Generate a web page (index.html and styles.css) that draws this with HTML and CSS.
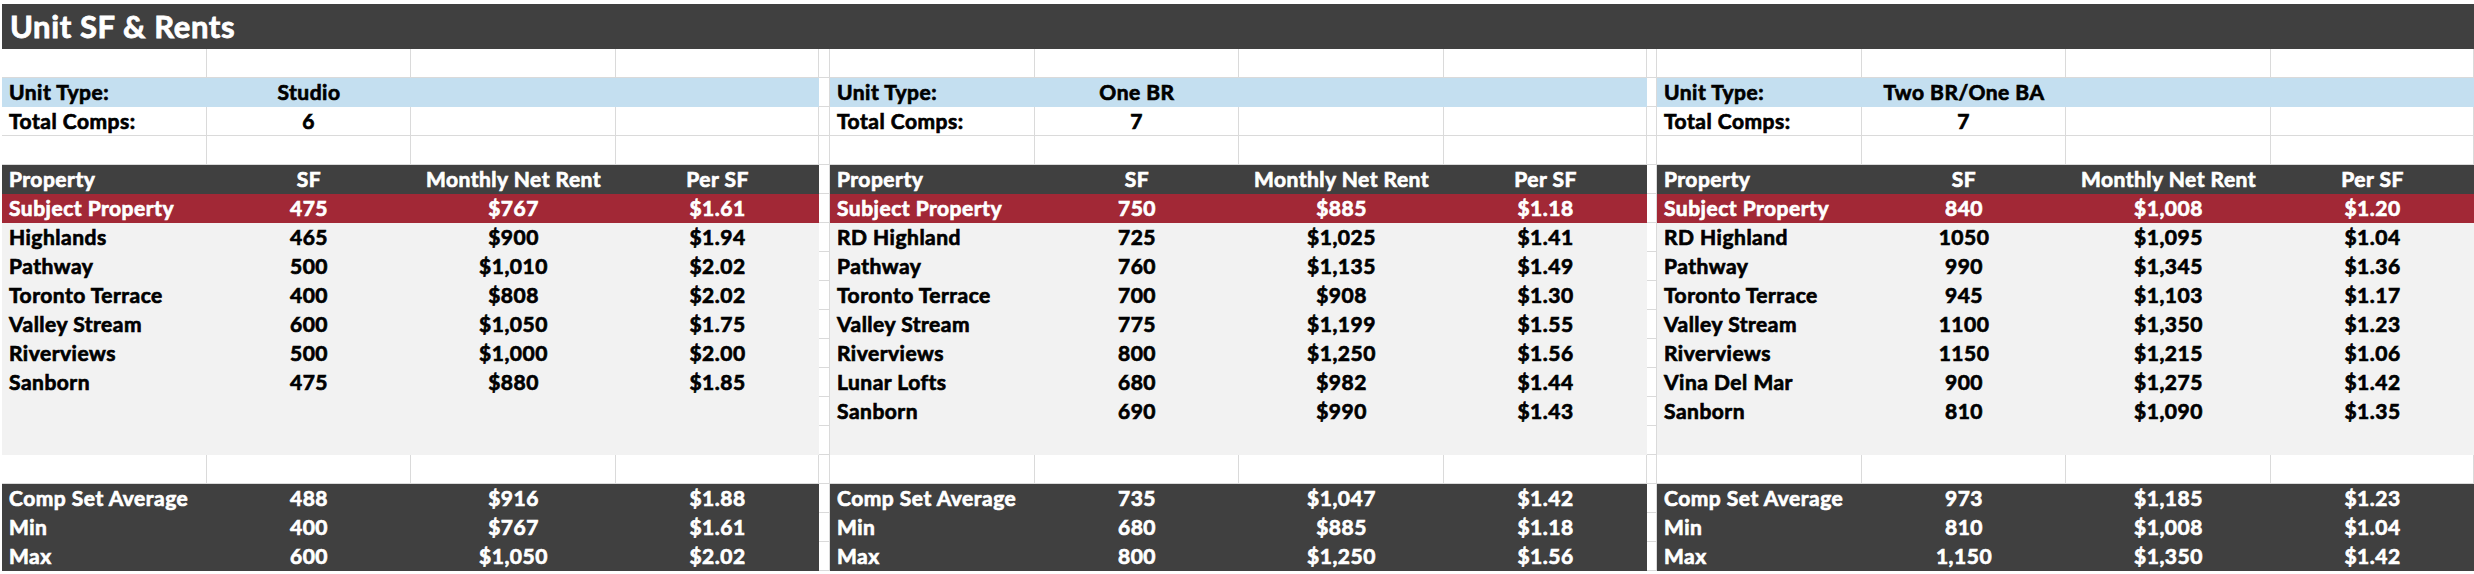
FILE: index.html
```html
<!DOCTYPE html>
<html lang="en">
<head>
<meta charset="utf-8">
<title>Unit SF &amp; Rents</title>
<link rel="stylesheet" href="styles.css">
</head>
<body>
<div class="sheet">
  <div class="title">Unit SF &amp; Rents</div>
  <div class="panels">

    <section class="panel">
      <div class="row blank"><div class="c"></div><div class="c"></div><div class="c"></div><div class="c"></div></div>
      <div class="row info"><div class="c l">Unit Type:</div><div class="c">Studio</div><div class="c"></div><div class="c"></div></div>
      <div class="row blank"><div class="c l">Total Comps:</div><div class="c">6</div><div class="c"></div><div class="c"></div></div>
      <div class="row blank"><div class="c"></div><div class="c"></div><div class="c"></div><div class="c"></div></div>
      <div class="row dark"><div class="c l">Property</div><div class="c">SF</div><div class="c">Monthly Net Rent</div><div class="c">Per SF</div></div>
      <div class="row subject"><div class="c l">Subject Property</div><div class="c">475</div><div class="c">$767</div><div class="c">$1.61</div></div>
      <div class="row comp"><div class="c l">Highlands</div><div class="c">465</div><div class="c">$900</div><div class="c">$1.94</div></div>
      <div class="row comp"><div class="c l">Pathway</div><div class="c">500</div><div class="c">$1,010</div><div class="c">$2.02</div></div>
      <div class="row comp"><div class="c l">Toronto Terrace</div><div class="c">400</div><div class="c">$808</div><div class="c">$2.02</div></div>
      <div class="row comp"><div class="c l">Valley Stream</div><div class="c">600</div><div class="c">$1,050</div><div class="c">$1.75</div></div>
      <div class="row comp"><div class="c l">Riverviews</div><div class="c">500</div><div class="c">$1,000</div><div class="c">$2.00</div></div>
      <div class="row comp"><div class="c l">Sanborn</div><div class="c">475</div><div class="c">$880</div><div class="c">$1.85</div></div>
      <div class="row comp"><div class="c"></div><div class="c"></div><div class="c"></div><div class="c"></div></div>
      <div class="row comp"><div class="c"></div><div class="c"></div><div class="c"></div><div class="c"></div></div>
      <div class="row blank"><div class="c"></div><div class="c"></div><div class="c"></div><div class="c"></div></div>
      <div class="row dark"><div class="c l">Comp Set Average</div><div class="c">488</div><div class="c">$916</div><div class="c">$1.88</div></div>
      <div class="row dark"><div class="c l">Min</div><div class="c">400</div><div class="c">$767</div><div class="c">$1.61</div></div>
      <div class="row dark"><div class="c l">Max</div><div class="c">600</div><div class="c">$1,050</div><div class="c">$2.02</div></div>
    </section>

    <div class="gap wide">
      <div class="g"></div><div class="g"></div><div class="g"></div><div class="g"></div><div class="g"></div><div class="g"></div>
      <div class="g"></div><div class="g"></div><div class="g"></div><div class="g"></div><div class="g"></div><div class="g"></div>
      <div class="g"></div><div class="g"></div><div class="g"></div><div class="g"></div><div class="g"></div><div class="g"></div>
    </div>

    <section class="panel">
      <div class="row blank"><div class="c"></div><div class="c"></div><div class="c"></div><div class="c"></div></div>
      <div class="row info"><div class="c l">Unit Type:</div><div class="c">One BR</div><div class="c"></div><div class="c"></div></div>
      <div class="row blank"><div class="c l">Total Comps:</div><div class="c">7</div><div class="c"></div><div class="c"></div></div>
      <div class="row blank"><div class="c"></div><div class="c"></div><div class="c"></div><div class="c"></div></div>
      <div class="row dark"><div class="c l">Property</div><div class="c">SF</div><div class="c">Monthly Net Rent</div><div class="c">Per SF</div></div>
      <div class="row subject"><div class="c l">Subject Property</div><div class="c">750</div><div class="c">$885</div><div class="c">$1.18</div></div>
      <div class="row comp"><div class="c l">RD Highland</div><div class="c">725</div><div class="c">$1,025</div><div class="c">$1.41</div></div>
      <div class="row comp"><div class="c l">Pathway</div><div class="c">760</div><div class="c">$1,135</div><div class="c">$1.49</div></div>
      <div class="row comp"><div class="c l">Toronto Terrace</div><div class="c">700</div><div class="c">$908</div><div class="c">$1.30</div></div>
      <div class="row comp"><div class="c l">Valley Stream</div><div class="c">775</div><div class="c">$1,199</div><div class="c">$1.55</div></div>
      <div class="row comp"><div class="c l">Riverviews</div><div class="c">800</div><div class="c">$1,250</div><div class="c">$1.56</div></div>
      <div class="row comp"><div class="c l">Lunar Lofts</div><div class="c">680</div><div class="c">$982</div><div class="c">$1.44</div></div>
      <div class="row comp"><div class="c l">Sanborn</div><div class="c">690</div><div class="c">$990</div><div class="c">$1.43</div></div>
      <div class="row comp"><div class="c"></div><div class="c"></div><div class="c"></div><div class="c"></div></div>
      <div class="row blank"><div class="c"></div><div class="c"></div><div class="c"></div><div class="c"></div></div>
      <div class="row dark"><div class="c l">Comp Set Average</div><div class="c">735</div><div class="c">$1,047</div><div class="c">$1.42</div></div>
      <div class="row dark"><div class="c l">Min</div><div class="c">680</div><div class="c">$885</div><div class="c">$1.18</div></div>
      <div class="row dark"><div class="c l">Max</div><div class="c">800</div><div class="c">$1,250</div><div class="c">$1.56</div></div>
    </section>

    <div class="gap">
      <div class="g"></div><div class="g"></div><div class="g"></div><div class="g"></div><div class="g"></div><div class="g"></div>
      <div class="g"></div><div class="g"></div><div class="g"></div><div class="g"></div><div class="g"></div><div class="g"></div>
      <div class="g"></div><div class="g"></div><div class="g"></div><div class="g"></div><div class="g"></div><div class="g"></div>
    </div>

    <section class="panel">
      <div class="row blank"><div class="c"></div><div class="c"></div><div class="c"></div><div class="c"></div></div>
      <div class="row info"><div class="c l">Unit Type:</div><div class="c">Two BR/One BA</div><div class="c"></div><div class="c"></div></div>
      <div class="row blank"><div class="c l">Total Comps:</div><div class="c">7</div><div class="c"></div><div class="c"></div></div>
      <div class="row blank"><div class="c"></div><div class="c"></div><div class="c"></div><div class="c"></div></div>
      <div class="row dark"><div class="c l">Property</div><div class="c">SF</div><div class="c">Monthly Net Rent</div><div class="c">Per SF</div></div>
      <div class="row subject"><div class="c l">Subject Property</div><div class="c">840</div><div class="c">$1,008</div><div class="c">$1.20</div></div>
      <div class="row comp"><div class="c l">RD Highland</div><div class="c">1050</div><div class="c">$1,095</div><div class="c">$1.04</div></div>
      <div class="row comp"><div class="c l">Pathway</div><div class="c">990</div><div class="c">$1,345</div><div class="c">$1.36</div></div>
      <div class="row comp"><div class="c l">Toronto Terrace</div><div class="c">945</div><div class="c">$1,103</div><div class="c">$1.17</div></div>
      <div class="row comp"><div class="c l">Valley Stream</div><div class="c">1100</div><div class="c">$1,350</div><div class="c">$1.23</div></div>
      <div class="row comp"><div class="c l">Riverviews</div><div class="c">1150</div><div class="c">$1,215</div><div class="c">$1.06</div></div>
      <div class="row comp"><div class="c l">Vina Del Mar</div><div class="c">900</div><div class="c">$1,275</div><div class="c">$1.42</div></div>
      <div class="row comp"><div class="c l">Sanborn</div><div class="c">810</div><div class="c">$1,090</div><div class="c">$1.35</div></div>
      <div class="row comp"><div class="c"></div><div class="c"></div><div class="c"></div><div class="c"></div></div>
      <div class="row blank"><div class="c"></div><div class="c"></div><div class="c"></div><div class="c"></div></div>
      <div class="row dark"><div class="c l">Comp Set Average</div><div class="c">973</div><div class="c">$1,185</div><div class="c">$1.23</div></div>
      <div class="row dark"><div class="c l">Min</div><div class="c">810</div><div class="c">$1,008</div><div class="c">$1.04</div></div>
      <div class="row dark"><div class="c l">Max</div><div class="c">1,150</div><div class="c">$1,350</div><div class="c">$1.42</div></div>
    </section>

  </div>
</div>
</body>
</html>
```

FILE: styles.css
```css
html, body {
  margin: 0;
  padding: 0;
  background: #ffffff;
}

.sheet {
  width: 2474px;
  padding: 4px 0 0 2px;
  box-sizing: border-box;
  font-family: Lato, "Open Sans", "Liberation Sans", sans-serif;
  font-weight: 700;
  color: #000000;
}

.title {
  height: 45px;
  line-height: 44px;
  background: #404040;
  color: #ffffff;
  font-size: 31px;
  padding-left: 8px;
  letter-spacing: 0.6px;
  -webkit-text-stroke: 0.8px currentColor;
}

.panels {
  display: flex;
}

.panel {
  width: 817px;
  display: flex;
  flex-direction: column;
}

.row {
  display: grid;
  grid-template-columns: 205px 204px 205px 203px;
  height: 29px;
  font-size: 21px;
  line-height: 27px;
  letter-spacing: 0.5px;
  -webkit-text-stroke: 0.7px currentColor;
}

.c {
  box-sizing: border-box;
  text-align: center;
  white-space: nowrap;
  overflow: visible;
}

.c.l {
  text-align: left;
  padding-left: 7px;
}

.row.blank .c {
  border-right: 1px solid #dadada;
  border-bottom: 1px solid #dadada;
  background: #ffffff;
}

.row.info {
  background: #c4dff0;
}

.row.dark {
  background: #404040;
  color: #ffffff;
}

.row.subject {
  background: #a22836;
  color: #ffffff;
}

.row.comp {
  background: #f2f2f2;
}

.gap {
  width: 10px;
  display: flex;
  flex-direction: column;
}

.gap.wide {
  width: 11px;
}

.g {
  height: 29px;
  box-sizing: border-box;
  border-right: 1px solid #dadada;
  border-bottom: 1px solid #dadada;
}
```
